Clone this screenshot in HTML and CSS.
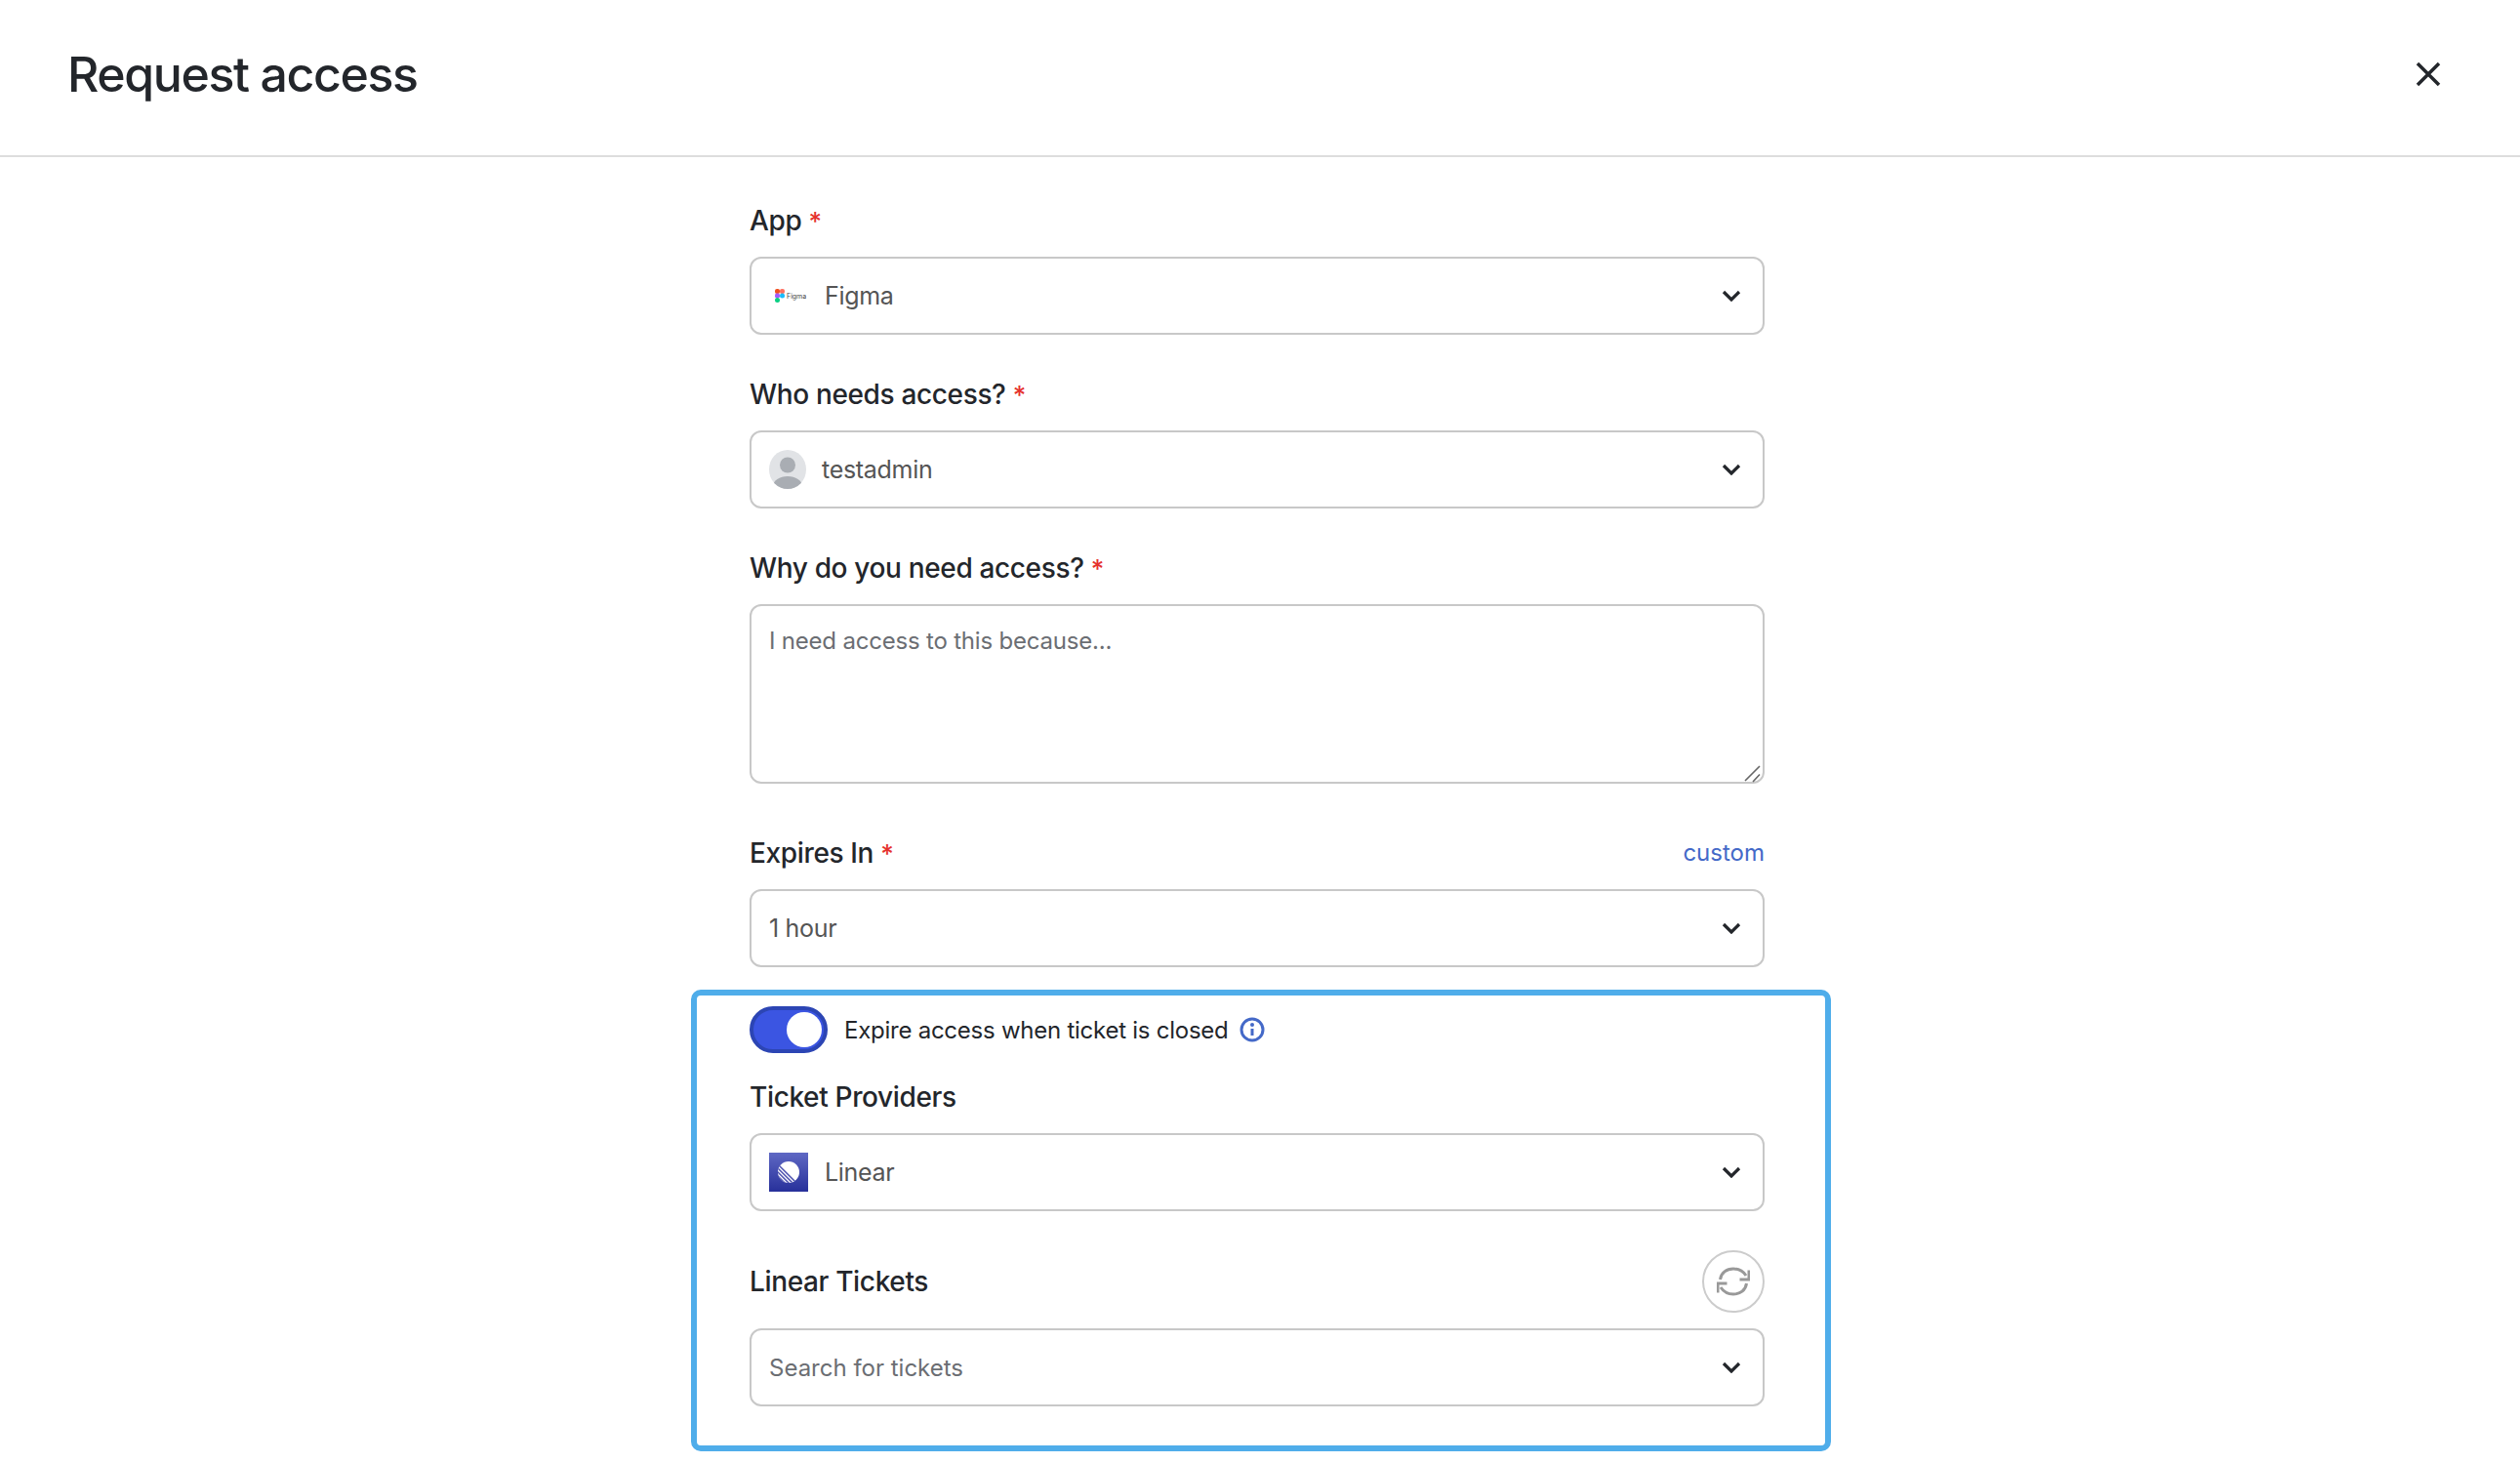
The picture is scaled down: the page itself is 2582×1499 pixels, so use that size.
FILE: index.html
```html
<!DOCTYPE html>
<html lang="en">

<head>
    <meta charset="UTF-8">
    <title>Request access</title>
    <link rel="stylesheet" href="styles.css">
</head>

<body>
    <div class="header">
        <h1 class="title">Request access</h1>
        <svg class="close" width="28" height="28" viewBox="0 0 28 28">
            <path d="M3 3 25 25M25 3 3 25" />
        </svg>
    </div>
    <div class="form">
        <div class="label"><span>App <em>*</em></span></div>
        <div class="select">
            <span class="figma-logo">
                <svg width="10" height="14" viewBox="0 0 10 14">
                    <rect x="0" y="0" width="5" height="5" rx="2" fill="#f24e1e" />
                    <rect x="5" y="0" width="5" height="5" rx="2" fill="#ff7262" />
                    <rect x="0" y="4.5" width="5" height="5" rx="2" fill="#a259ff" />
                    <circle cx="7.5" cy="7" r="2.5" fill="#1abcfe" />
                    <rect x="0" y="9" width="5" height="5" rx="2.5" fill="#0acf83" />
                </svg>
                <span class="figma-word">Figma</span>
            </span>
            <span class="value figma-value">Figma</span>
            <svg class="chevron" width="20" height="12" viewBox="0 0 20 12"><path d="M2 2 10 10 18 2" /></svg>
        </div>

        <div class="label next"><span>Who needs access? <em>*</em></span></div>
        <div class="select">
            <svg class="avatar" width="38" height="40" viewBox="0 0 38 40">
                <defs><clipPath id="av"><ellipse cx="19" cy="20" rx="19" ry="20" /></clipPath></defs>
                <ellipse cx="19" cy="20" rx="19" ry="20" fill="#e1e3e6" />
                <g clip-path="url(#av)" fill="#a9adb3">
                    <circle cx="19" cy="15.500" r="8" />
                    <ellipse cx="19" cy="37" rx="15" ry="10" />
                </g>
            </svg>
            <span class="value">testadmin</span>
            <svg class="chevron" width="20" height="12" viewBox="0 0 20 12"><path d="M2 2 10 10 18 2" /></svg>
        </div>

        <div class="label next"><span>Why do you need access? <em>*</em></span></div>
        <div class="reason-wrap">
            <textarea class="reason" placeholder="I need access to this because..."></textarea>
            <svg class="grip" width="18" height="18" viewBox="0 0 18 18">
                <path d="M1 16 16 1M9 17 16 9.500" />
            </svg>
        </div>

        <div class="label expires"><span>Expires In <em>*</em></span><a class="custom" href="#">custom</a></div>
        <div class="select">
            <span class="value">1 hour</span>
            <svg class="chevron" width="20" height="12" viewBox="0 0 20 12"><path d="M2 2 10 10 18 2" /></svg>
        </div>

        <div class="ticket-box">
            <div class="toggle-row">
                <div class="toggle"><div class="knob"></div></div>
                <span class="toggle-text">Expire access when ticket is closed</span>
                <svg class="info" width="26" height="26" viewBox="0 0 26 26">
                    <circle cx="13" cy="13" r="11" />
                    <path d="M13 12V19" />
                    <circle class="dot" cx="13" cy="8" r="2" />
                </svg>
            </div>

            <div class="label providers"><span>Ticket Providers</span></div>
            <div class="select">
                <svg class="linear-logo" width="40" height="40" viewBox="0 0 40 40">
                    <defs>
                        <linearGradient id="lg" x1="0" y1="0" x2="0" y2="1">
                            <stop offset="0" stop-color="#5f68c4" />
                            <stop offset="1" stop-color="#27309a" />
                        </linearGradient>
                        <clipPath id="ball"><circle cx="20" cy="20" r="11" /></clipPath>
                    </defs>
                    <rect width="40" height="40" fill="url(#lg)" />
                    <circle cx="20" cy="20" r="11" fill="#fff" />
                    <g clip-path="url(#ball)" stroke="#4a4fae" stroke-width="1.500">
                        <path d="M0 3 37 40M0 7 33 40M0 11 29 40M0 15 25 40" />
                    </g>
                </svg>
                <span class="value linear-value">Linear</span>
                <svg class="chevron" width="20" height="12" viewBox="0 0 20 12"><path d="M2 2 10 10 18 2" /></svg>
            </div>

            <div class="tickets-row">
                <span class="tickets-label">Linear Tickets</span>
                <div class="refresh">
                    <svg width="34" height="34" viewBox="0 0 34 34">
                        <path d="M3.500 15C4.500 8 10 4 17 4 22.500 4 27 6.500 30 11" />
                        <path d="M23.500 15H33V5.500" />
                        <path d="M30.500 19C29.500 26 24 30 17 30 11.500 30 7 27.500 4 23" />
                        <path d="M10.500 19H1V28.500" />
                    </svg>
                </div>
            </div>
            <div class="select">
                <span class="value placeholder">Search for tickets</span>
                <svg class="chevron" width="20" height="12" viewBox="0 0 20 12"><path d="M2 2 10 10 18 2" /></svg>
            </div>
        </div>
    </div>
</body>

</html>
```

FILE: styles.css
```css
* {
    margin: 0;
    padding: 0;
    box-sizing: border-box;
}

body {
    background-color: #fff;
    color: #23262b;
    font-family: "Inter", "Liberation Sans", sans-serif;
}

.header {
    height: 161px;
    border-bottom: 2px solid #ddd;
    display: flex;
    align-items: center;
    justify-content: space-between;
    padding: 0 80px 8px 69px;
}

.title {
    font-size: 50px;
    font-weight: 500;
    letter-spacing: -1.4px;
}

.close path {
    fill: none;
    stroke: #23262b;
    stroke-width: 3.500;
}

.form {
    width: 1040px;
    margin-left: 768px;
    padding-top: 44px;
}

.label {
    height: 40px;
    line-height: 42px;
    margin-bottom: 18px;
    font-size: 28px;
    font-weight: 500;
    letter-spacing: -0.35px;
    display: flex;
    justify-content: space-between;
}

.label em {
    color: #e5322d;
    font-style: normal;
    font-size: 26px;
}

.next {
    margin-top: 40px;
}

.expires {
    margin-top: 50px;
}

.custom {
    color: #4469c8;
    font-size: 24px;
    font-weight: 400;
    letter-spacing: 0;
    text-decoration: none;
}

.select {
    height: 80px;
    border: 2px solid #c8c8c8;
    border-radius: 12px;
    padding: 0 22px 0 18px;
    display: flex;
    align-items: center;
}

.value {
    font-size: 25px;
    letter-spacing: -0.3px;
    color: #555;
}

.figma-logo {
    width: 39px;
    margin-left: 6px;
    display: flex;
    align-items: center;
    gap: 2px;
}

.figma-word {
    font-size: 7px;
    color: #444;
}

.figma-value {
    margin-left: 12px;
}

.avatar {
    margin-right: 16px;
}

.linear-logo {
    margin-right: 17px;
}

.chevron {
    margin-left: auto;
}

.chevron path {
    fill: none;
    stroke: #23262b;
    stroke-width: 3.200;
}

.reason-wrap {
    position: relative;
}

.reason {
    display: block;
    width: 1040px;
    height: 184px;
    border: 2px solid #c8c8c8;
    border-radius: 12px;
    padding: 21px 18px;
    outline: none;
    resize: none;
    font-family: inherit;
    font-size: 24px;
    letter-spacing: -0.2px;
    color: #555;
}

.reason::placeholder {
    color: #6b6e73;
}

.grip {
    position: absolute;
    right: 3px;
    bottom: 1px;
}

.grip path {
    fill: none;
    stroke: #666;
    stroke-width: 1.600;
}

.ticket-box {
    margin: 23px -68px 0 -60px;
    border: 6px solid #4fadea;
    border-radius: 10px;
    padding: 11px 62px 40px 54px;
}

.toggle-row {
    display: flex;
    align-items: center;
}

.toggle {
    width: 80px;
    height: 48px;
    border: 4px solid #2c45b4;
    border-radius: 24px;
    background-color: #3b55e2;
    position: relative;
}

.knob {
    position: absolute;
    top: 2px;
    right: 2px;
    width: 36px;
    height: 36px;
    border-radius: 50%;
    background-color: #fff;
}

.toggle-text {
    margin-left: 17px;
    font-size: 24px;
    letter-spacing: -0.25px;
}

.info {
    margin-left: 11px;
}

.info circle,
.info path {
    fill: none;
    stroke: #4469c8;
    stroke-width: 3;
}

.info .dot {
    fill: #4469c8;
    stroke: none;
}

.providers {
    margin-top: 24px;
}

.tickets-row {
    margin: 40px 0 16px;
    display: flex;
    align-items: center;
    justify-content: space-between;
}

.tickets-label {
    font-size: 28px;
    font-weight: 500;
    letter-spacing: -0.35px;
}

.refresh {
    width: 64px;
    height: 64px;
    border: 2px solid #ccc;
    border-radius: 50%;
    display: flex;
    align-items: center;
    justify-content: center;
}

.refresh path {
    fill: none;
    stroke: #999;
    stroke-width: 3;
}

.placeholder {
    font-size: 24px;
    letter-spacing: 0;
    color: #6b6e73;
}
```
